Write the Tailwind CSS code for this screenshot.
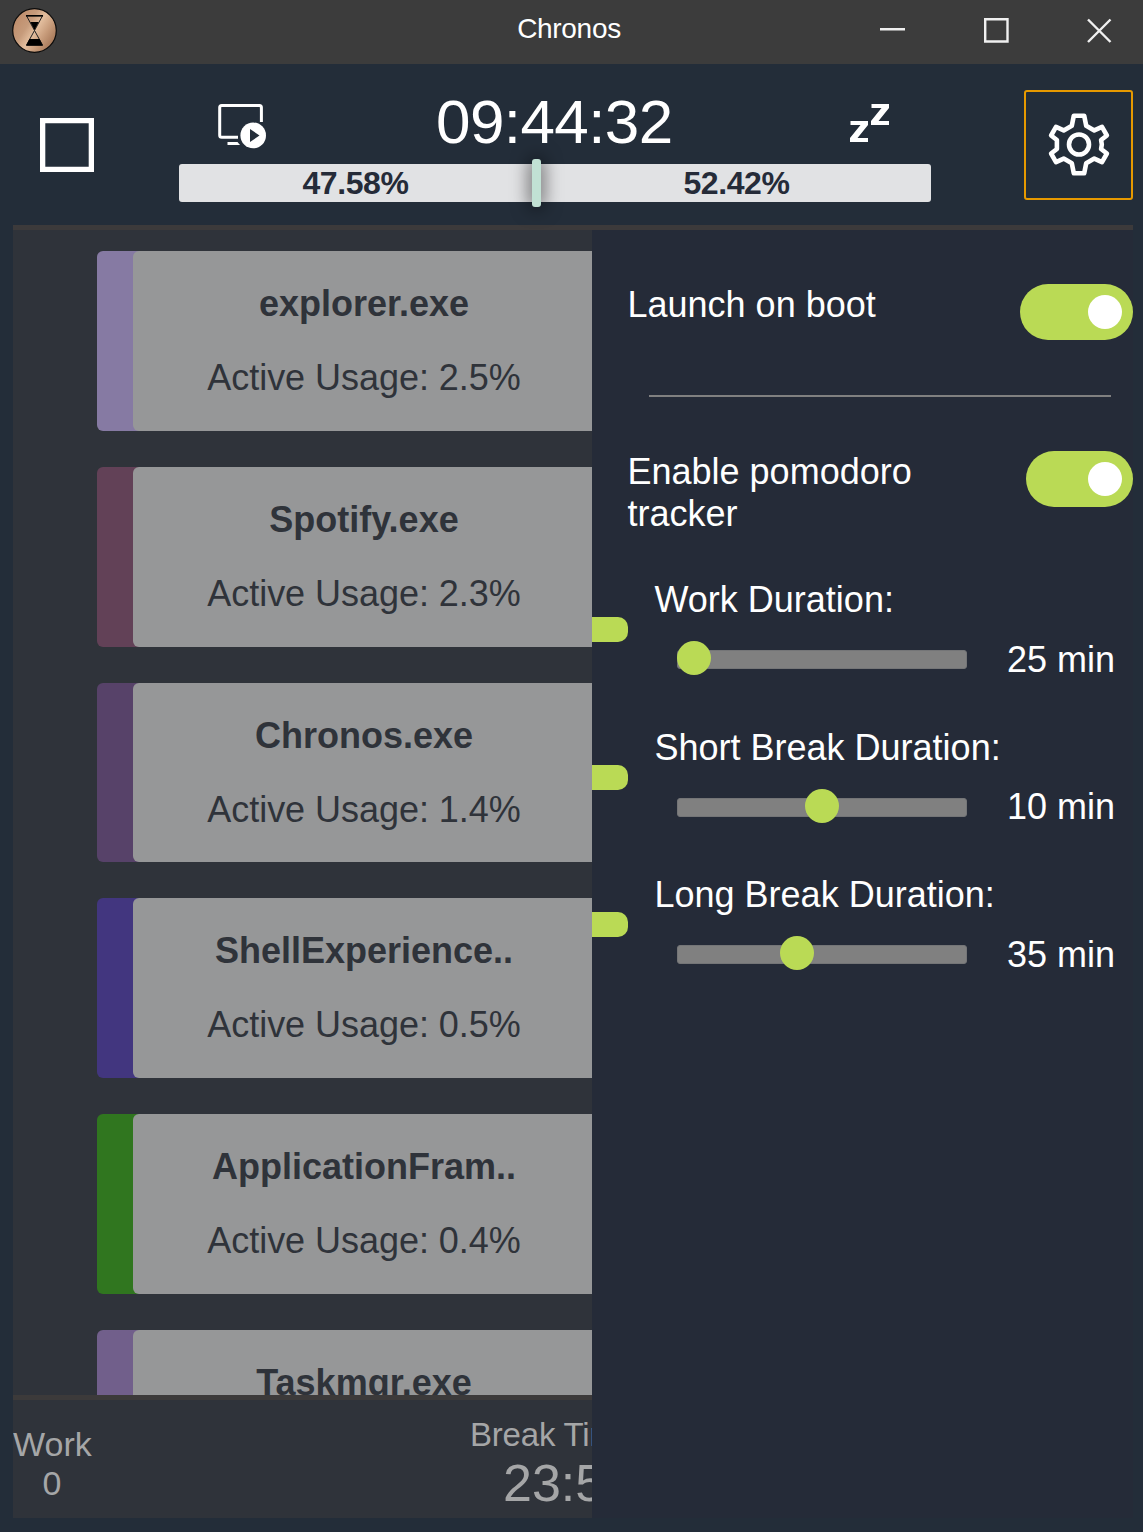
<!DOCTYPE html>
<html lang="en">
<head>
<meta charset="utf-8">
<title>Chronos</title>
<script src="https://cdn.jsdelivr.net/npm/@tailwindcss/browser@4"></script>
</head>
<body class="w-[1143px] h-[1532px] overflow-hidden bg-[#232d39] font-['Liberation_Sans',Arial,sans-serif] text-white flex flex-col">
  <!-- Window title bar -->
  <div class="h-16 shrink-0 bg-[#3c3c3c] grid grid-cols-[1fr_auto_1fr]">
    <div class="pl-3 pt-2">
      <svg class="size-[46px]" viewBox="0 0 46 46">
        <defs><linearGradient id="bronze" x1="0" y1="0.2" x2="1" y2="0.85">
          <stop offset="0" stop-color="#aa7d5d"/><stop offset=".12" stop-color="#c0906f"/><stop offset=".32" stop-color="#c69b7b"/><stop offset=".5" stop-color="#e2bd9d"/><stop offset=".7" stop-color="#c79b7a"/><stop offset="1" stop-color="#99694a"/>
        </linearGradient></defs>
        <circle cx="22.5" cy="22.5" r="21.8" fill="url(#bronze)" stroke="#0b0b0b" stroke-width="1.2"/>
        <path d="M14.5 7.800h16L22.500 22.500zM22.500 22.500L14.500 37h16z" fill="none" stroke="#222" stroke-width="1"/>
        <path d="M14 7h17v1.600H14zM18.300 14h8.400L22.500 22zM17.400 31h10.200l3.400 6.700H14z" fill="#000"/>
      </svg>
    </div>
    <div class="pt-[13px] text-[28px] leading-8 tracking-[-0.3px] -ml-[5px]">Chronos</div>
    <div class="flex justify-end">
      <svg class="w-[270px] h-16" viewBox="873 0 270 64" fill="none" stroke="#f0f0f0" stroke-width="2.400">
        <path d="M880 29.200h25M985.200 19.200h22.300v22.300h-22.300zM1088 19.500l22.500 22.500M1110.500 19.500l-22.500 22.500"/>
      </svg>
    </div>
  </div>

  <!-- Tracking header -->
  <header class="ml-[13px] mr-[10px] h-[166px] shrink-0 border-b-[5px] border-[#3c3a3b] flex">
    <div class="w-[166px] pl-[27px] pt-[54px]"><svg class="size-[54px]" viewBox="0 0 54 54"><path d="M2.650 2.650h48.700v48.700H2.650z" fill="none" stroke="#fff" stroke-width="5.300"/></svg></div>
    <div class="w-[752px] pt-6">
      <div class="h-[76px] flex items-start">
        <svg class="w-[258px] h-[76px]" viewBox="179 88 258 76">
          <path d="M261.400 122v-14.500a2 2 0 0 0-2-2h-37.700a2 2 0 0 0-2 2v27.700a2 2 0 0 0 2 2h16.300" fill="none" stroke="#fff" stroke-width="3"/>
          <path d="M227.500 142h10l2.500 3h-12.500z" fill="#fff"/>
          <circle cx="253.200" cy="135.400" r="12.800" fill="#fff"/>
          <path d="M250 129v13l9.500-6.500z" fill="#232d39"/>
        </svg>
        <div class="w-[240px] -ml-[1px] -mr-[2px] text-[62px] leading-[68px] tracking-[-0.6px] whitespace-nowrap">09:44:32</div>
        <svg class="w-[257px] h-[76px]" viewBox="674 88 257 76" fill="#fff">
          <path d="M871.500 104H889v4l-10.500 13H889v4h-18v-4l10.500-13h-10zM850.500 121H868v4l-10.500 13H868v4h-18v-4l10.500-13h-10z"/>
        </svg>
      </div>
      <div class="relative w-[752px] h-[38px] rounded-[3px] bg-[#e1e2e4] flex text-[#252b38] text-[32px] leading-[38px] tracking-[-0.4px] font-bold text-center">
        <div class="w-[353px]">47.58%</div>
        <div class="w-[399px] pl-[10px]">52.42%</div>
        <div class="absolute left-[353px] -top-[5px] w-[9px] h-12 rounded-[3px] bg-[#c1e1d4] shadow-[0_0_18px_2px_rgba(0,0,0,0.6)]"></div>
      </div>
    </div>
    <div class="w-[202px] pt-[26px] flex justify-end">
      <div class="w-[109px] h-[110px] rounded-[3px] border-2 border-[#e69900] flex items-center justify-center">
        <svg class="w-[105px] h-[106px]" viewBox="1026 92 105 106" fill="none" stroke="#fff" stroke-width="4.600" stroke-linejoin="round">
          <path d="M1073.800 115.700h10.400l2 10 8.100 4.700 7.700-3.600 4.900 8.700-5.800 4.500 .700 4.500-.700 4.500 5.800 4.500-4.900 8.700-7.700-3.600-8.100 4.700-2 10h-10.400l-2-10-8.100-4.700-7.700 3.600-4.900-8.700 5.800-4.500v-9l-5.800-4.500 4.900-8.700 7.700 3.600 8.100-4.700z"/>
          <circle cx="1079" cy="144.500" r="10"/>
        </svg>
      </div>
    </div>
  </header>

  <main class="ml-[13px] mr-[10px] h-[1288px] shrink-0 flex">
    <!-- Usage list and timer summary, dimmed behind the settings drawer -->
    <section class="w-[579px] overflow-hidden bg-[#2f333a] flex flex-col">
      <div id="apps" class="h-[1165px] shrink-0 overflow-hidden pl-[84px] pt-[21px] flex flex-col gap-9"></div>
      <div class="grow border-t-[5px] border-[#3c3a3a] text-[#a5a6a7] flex">
        <div class="w-[78px] pt-[25px] text-center text-[34px] leading-[39px]">Work<br>0</div>
        <div class="pl-[377px] pt-[17px] whitespace-nowrap">
          <div class="text-[33px] leading-9 tracking-[-0.2px] pl-0.5">Break Time</div>
          <div class="pl-[35px] text-[52px] leading-[60px]">23:59</div>
        </div>
      </div>
    </section>

    <!-- Settings drawer -->
    <aside class="w-[541px] bg-[#252b38] text-[36px] leading-[42px]">
      <div class="h-[165px] pl-[35.500px] pt-[54px] flex justify-between items-start">
        <div>Launch on boot</div>
        <div class="w-[113px] h-14 rounded-full bg-[#bada55] flex items-center justify-end pr-[11px]"><div class="size-[34px] rounded-full bg-white"></div></div>
      </div>
      <div class="ml-auto w-[462px] mr-[22px] h-0.5 bg-[#808080]"></div>
      <div class="h-[181px] pl-[35.500px] pt-[54px] flex justify-between items-start">
        <div class="w-[320px]">Enable pomodoro tracker</div>
        <div class="w-[107px] h-14 rounded-full bg-[#bada55] flex items-center justify-end pr-[11px]"><div class="size-[34px] rounded-full bg-white"></div></div>
      </div>
      <div id="durations"></div>
    </aside>
  </main>

  <script>
    const apps = [
      ['explorer.exe', '2.5', '#867aa3'],
      ['Spotify.exe', '2.3', '#624157'],
      ['Chronos.exe', '1.4', '#574269'],
      ['ShellExperience..', '0.5', '#42367f'],
      ['ApplicationFram..', '0.4', '#30761f'],
      ['Taskmgr.exe', '0.3', '#715f8b']
    ];
    document.getElementById('apps').innerHTML = apps.map(([name, pct, color]) => `
      <div class="w-[498px] h-[179.840px] shrink-0 rounded-[6px] pl-9" style="background:${color}">
        <div class="h-full rounded-l-[6px] bg-[#969798] text-[#2f333a] text-[36px] leading-[42px] text-center pt-8 whitespace-nowrap">
          <div class="font-bold">${name}</div>
          <div class="mt-8 tracking-[-0.04px]">Active Usage: ${pct}%</div>
        </div>
      </div>`).join('');
    const durations = [['Work', 25, 0], ['Short Break', 10, 128], ['Long Break', 35, 102.5]];
    document.getElementById('durations').innerHTML = durations.map(([name, min, x]) => `
      <div class="h-[147.600px]">
        <div class="pl-[62.500px] h-[42px] pt-px">${name} Duration:</div>
        <div class="flex items-start">
          <div class="w-9 h-[25px] -mt-[3px] rounded-r-[10px] bg-[#bada55]"></div>
          <div class="ml-[49px] mt-[30px] relative w-[290px] h-[19px] rounded-[3px] bg-[#808080] border border-[#747577]">
            <div class="absolute -top-[10px] size-[34px] rounded-full bg-[#bada55]" style="left:${x - 1}px"></div>
          </div>
          <div class="ml-10 mt-[18.600px] whitespace-nowrap">${min} min</div>
        </div>
      </div>`).join('');
  </script>
</body>
</html>
